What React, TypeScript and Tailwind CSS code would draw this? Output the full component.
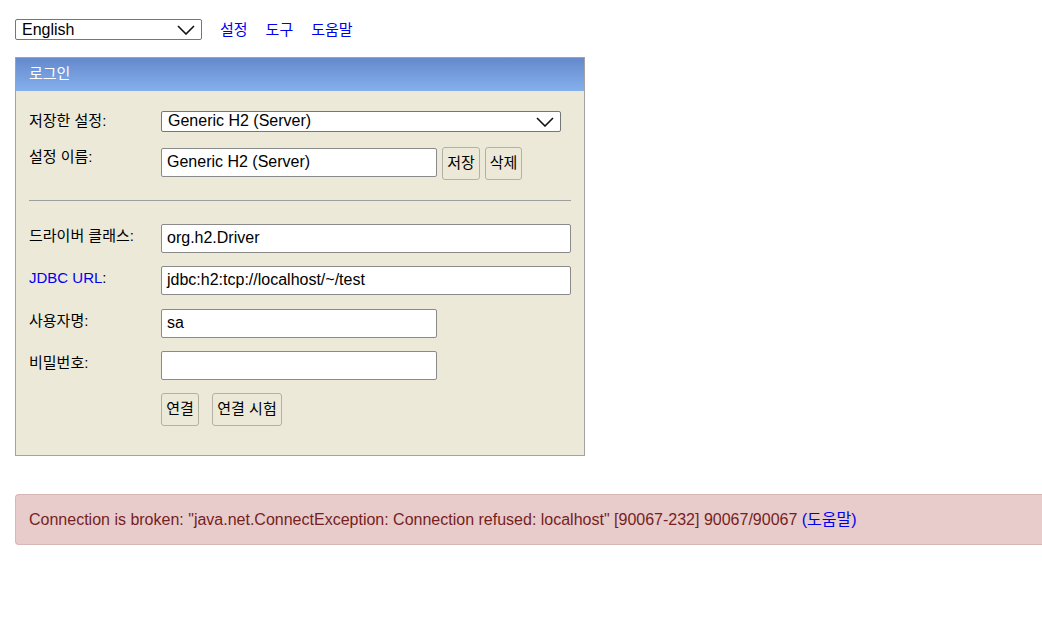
import React from "react";

const font = { fontFamily: '"Liberation Sans", "Noto Sans CJK KR", Arial, sans-serif' };

function Chevron({ className }: { className?: string }) {
  return (
    <svg className={className} width="18" height="10" viewBox="0 0 18 10" fill="none">
      <path d="M1 1l8 8 8-8" stroke="#111" strokeWidth="1.6" />
    </svg>
  );
}

function Select({ value, width }: { value: string; width: string }) {
  return (
    <div className={`relative h-[21px] ${width} border border-[#767676] rounded-[2px] bg-white flex items-center`}>
      <span className="pl-[6px] text-[16px] leading-none text-black">{value}</span>
      <Chevron className="absolute right-[6px] top-[5px]" />
    </div>
  );
}

function Input({ value, width }: { value: string; width: string }) {
  return (
    <div className={`h-[29px] ${width} border border-[#8a8a8a] rounded-[2px] bg-white flex items-center`}>
      <span className="pl-[5px] text-[16px] leading-none text-black">{value}</span>
    </div>
  );
}

function Button({ label, width }: { label: string; width: string }) {
  return (
    <div className={`h-[33px] ${width} border border-[#b3b0a6] rounded-[3px] bg-[#ece9d8] flex items-center justify-center text-[15px] text-black`}>
      {label}
    </div>
  );
}

function Row({ label, children, blue, top }: { label: string; children: React.ReactNode; blue?: boolean; top: string }) {
  return (
    <div className={`flex ${top}`}>
      <div className="w-[132px] pt-[2px] text-[15px] leading-[20px] text-black">
        {blue ? (
          <>
            <span className="text-[#0000ee]">JDBC URL</span>:
          </>
        ) : (
          label
        )}
      </div>
      {children}
    </div>
  );
}

export default function App() {
  return (
    <div className="min-h-[640px] w-[1042px] bg-white overflow-hidden" style={font}>
      <div className="pl-[15px] pt-[19px] h-[40px] flex items-start">
        <Select value="English" width="w-[187px]" />
        <div className="flex gap-[18px] ml-[18px] h-[21px] items-center text-[15px] leading-none text-[#0000ee]">
          <span>설정</span>
          <span>도구</span>
          <span>도움말</span>
        </div>
      </div>

      <div className="ml-[15px] mt-[17px] w-[570px] h-[399px] border border-[#a3a3a3] bg-[#ece9d8]">
        <div className="h-[33px] bg-gradient-to-b from-[#6589cc] to-[#85b0ec] flex items-center pl-[13px] text-[15px] text-white">
          로그인
        </div>
        <div className="pl-[13px] pr-[13px]">
          <div className="flex items-center pt-[19px]">
            <div className="w-[132px] text-[15px] text-black">저장한 설정:</div>
            <Select value="Generic H2 (Server)" width="w-[400px]" />
          </div>
          <div className="flex pt-[14px]">
            <div className="w-[132px] text-[15px] leading-[20px] text-black">설정 이름:</div>
            <div className="mt-[1px]">
              <Input value="Generic H2 (Server)" width="w-[276px]" />
            </div>
            <div className="ml-[5px]">
              <Button label="저장" width="w-[38px]" />
            </div>
            <div className="ml-[5px]">
              <Button label="삭제" width="w-[37px]" />
            </div>
          </div>
          <div className="mt-[20px] h-px bg-[#9e9e9e]" />
          <Row label="드라이버 클래스:" top="pt-[23px]">
            <Input value="org.h2.Driver" width="w-[410px]" />
          </Row>
          <Row label="" blue top="pt-[13px]">
            <Input value="jdbc:h2:tcp://localhost/~/test" width="w-[410px]" />
          </Row>
          <Row label="사용자명:" top="pt-[14px]">
            <Input value="sa" width="w-[276px]" />
          </Row>
          <Row label="비밀번호:" top="pt-[13px]">
            <Input value="" width="w-[276px]" />
          </Row>
          <div className="flex pt-[13px] pl-[132px] gap-[13px]">
            <Button label="연결" width="w-[38px]" />
            <Button label="연결 시험" width="w-[70px]" />
          </div>
        </div>
      </div>

      <div className="ml-[15px] mt-[38px] h-[51px] border border-r-0 border-[#d9b6b6] rounded-l-[4px] bg-[#e8cbcb] flex items-center pl-[13px] text-[16px] text-[#761f1f] whitespace-nowrap">
        Connection is broken: "java.net.ConnectException: Connection refused: localhost" [90067-232] 90067/90067&nbsp;
        <span className="text-[#0000ee]">(도움말)</span>
      </div>
    </div>
  );
}
